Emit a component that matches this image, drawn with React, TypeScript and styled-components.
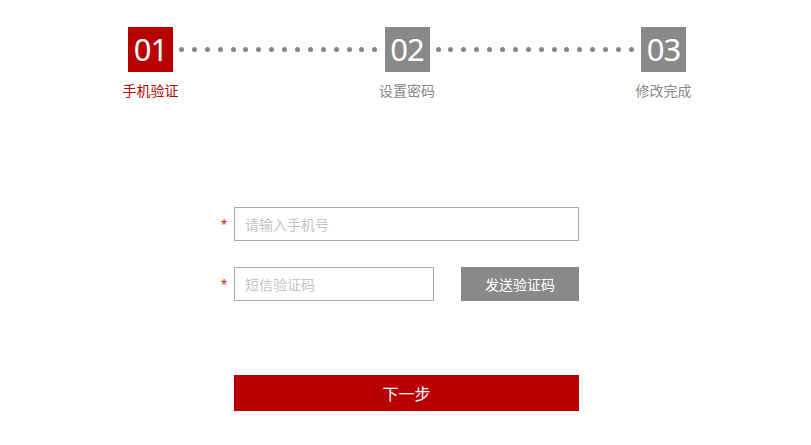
import React from 'react';
import styled, { createGlobalStyle } from 'styled-components';

const GlobalStyle = createGlobalStyle`
  html, body {
    margin: 0;
    padding: 0;
    background: #ffffff;
  }
  body {
    font-family: "Noto Sans CJK SC", "Noto Sans", sans-serif;
    font-size: 14px;
  }
`;

const Page = styled.div`
  width: 811px;
  height: 445px;
  background: #ffffff;
  overflow: hidden;
`;

const Steps = styled.div`
  display: flex;
  width: 558px;
  margin: 27px 0 0 128px;
`;

const Step = styled.div`
  display: flex;
  flex-direction: column;
  align-items: center;
  width: 45px;
  flex: none;
`;

const StepNumber = styled.div<{ $active?: boolean }>`
  width: 45px;
  height: 45px;
  display: flex;
  align-items: center;
  justify-content: center;
  background: ${(props) => (props.$active ? '#b90000' : '#898989')};
  color: #ffffff;
  font-family: "Noto Sans", "Open Sans", sans-serif;
  font-size: 31px;
  line-height: 1;
  letter-spacing: -1px;
`;

const StepLabel = styled.div<{ $active?: boolean }>`
  margin-top: 8px;
  white-space: nowrap;
  font-size: 14px;
  line-height: 20px;
  color: ${(props) => (props.$active ? '#b90000' : '#888888')};
`;

const Connector = styled.div`
  flex: 1;
  height: 45px;
  display: flex;
  align-items: center;
  justify-content: space-between;
  padding: 0 7px 0 6px;
`;

const Dot = styled.span`
  width: 5px;
  height: 5px;
  border-radius: 50%;
  background: #858585;
`;

const Form = styled.form`
  display: flex;
  flex-direction: column;
  width: 365px;
  margin: 107px 0 0 214px;
`;

const Row = styled.div`
  display: flex;
  align-items: center;
  height: 34px;
  margin-bottom: 26px;
`;

const Star = styled.span`
  width: 20px;
  text-align: center;
  color: #cc3300;
  font-family: "Liberation Sans", sans-serif;
  font-size: 16px;
  line-height: 16px;
  padding-top: 3px;
`;

const Input = styled.input<{ $width: number }>`
  box-sizing: border-box;
  width: ${(props) => props.$width}px;
  height: 34px;
  border: 1px solid #aaaaaa;
  padding: 0 10px;
  font-family: "Noto Sans CJK SC", sans-serif;
  font-size: 14px;
  color: #333333;
  outline: none;

  &::placeholder {
    color: #c4c4c4;
  }
`;

const CodeButton = styled.button`
  margin-left: 27px;
  width: 118px;
  height: 34px;
  border: none;
  background: #898989;
  color: #ffffff;
  font-family: "Noto Sans CJK SC", sans-serif;
  font-size: 14px;
  padding: 0;
  cursor: pointer;
`;

const NextButton = styled.button`
  margin: 48px 0 0 20px;
  width: 345px;
  height: 36px;
  border: none;
  background: #b90000;
  color: #ffffff;
  font-family: "Noto Sans CJK SC", sans-serif;
  font-size: 16px;
  padding: 0;
  cursor: pointer;
`;

const steps = [
  { num: '01', label: '手机验证' },
  { num: '02', label: '设置密码' },
  { num: '03', label: '修改完成' },
];

const Dots = () => (
  <Connector>
    { Array.from({ length: 16 }).map((_, i) => <Dot key={ i } />) }
  </Connector>
);

const App = () => {
  const current = 0;
  return (
    <Page>
      <GlobalStyle />
      <Steps>
        { steps.map((step, i) => (
          <React.Fragment key={ step.num }>
            { i > 0 && <Dots /> }
            <Step>
              <StepNumber $active={ i === current }>{ step.num }</StepNumber>
              <StepLabel $active={ i === current }>{ step.label }</StepLabel>
            </Step>
          </React.Fragment>
        )) }
      </Steps>
      <Form onSubmit={ (e) => e.preventDefault() }>
        <Row>
          <Star>*</Star>
          <Input $width={ 345 } placeholder="请输入手机号" />
        </Row>
        <Row>
          <Star>*</Star>
          <Input $width={ 200 } placeholder="短信验证码" />
          <CodeButton type="button">发送验证码</CodeButton>
        </Row>
        <NextButton type="submit">下一步</NextButton>
      </Form>
    </Page>
  );
};

export default App;
